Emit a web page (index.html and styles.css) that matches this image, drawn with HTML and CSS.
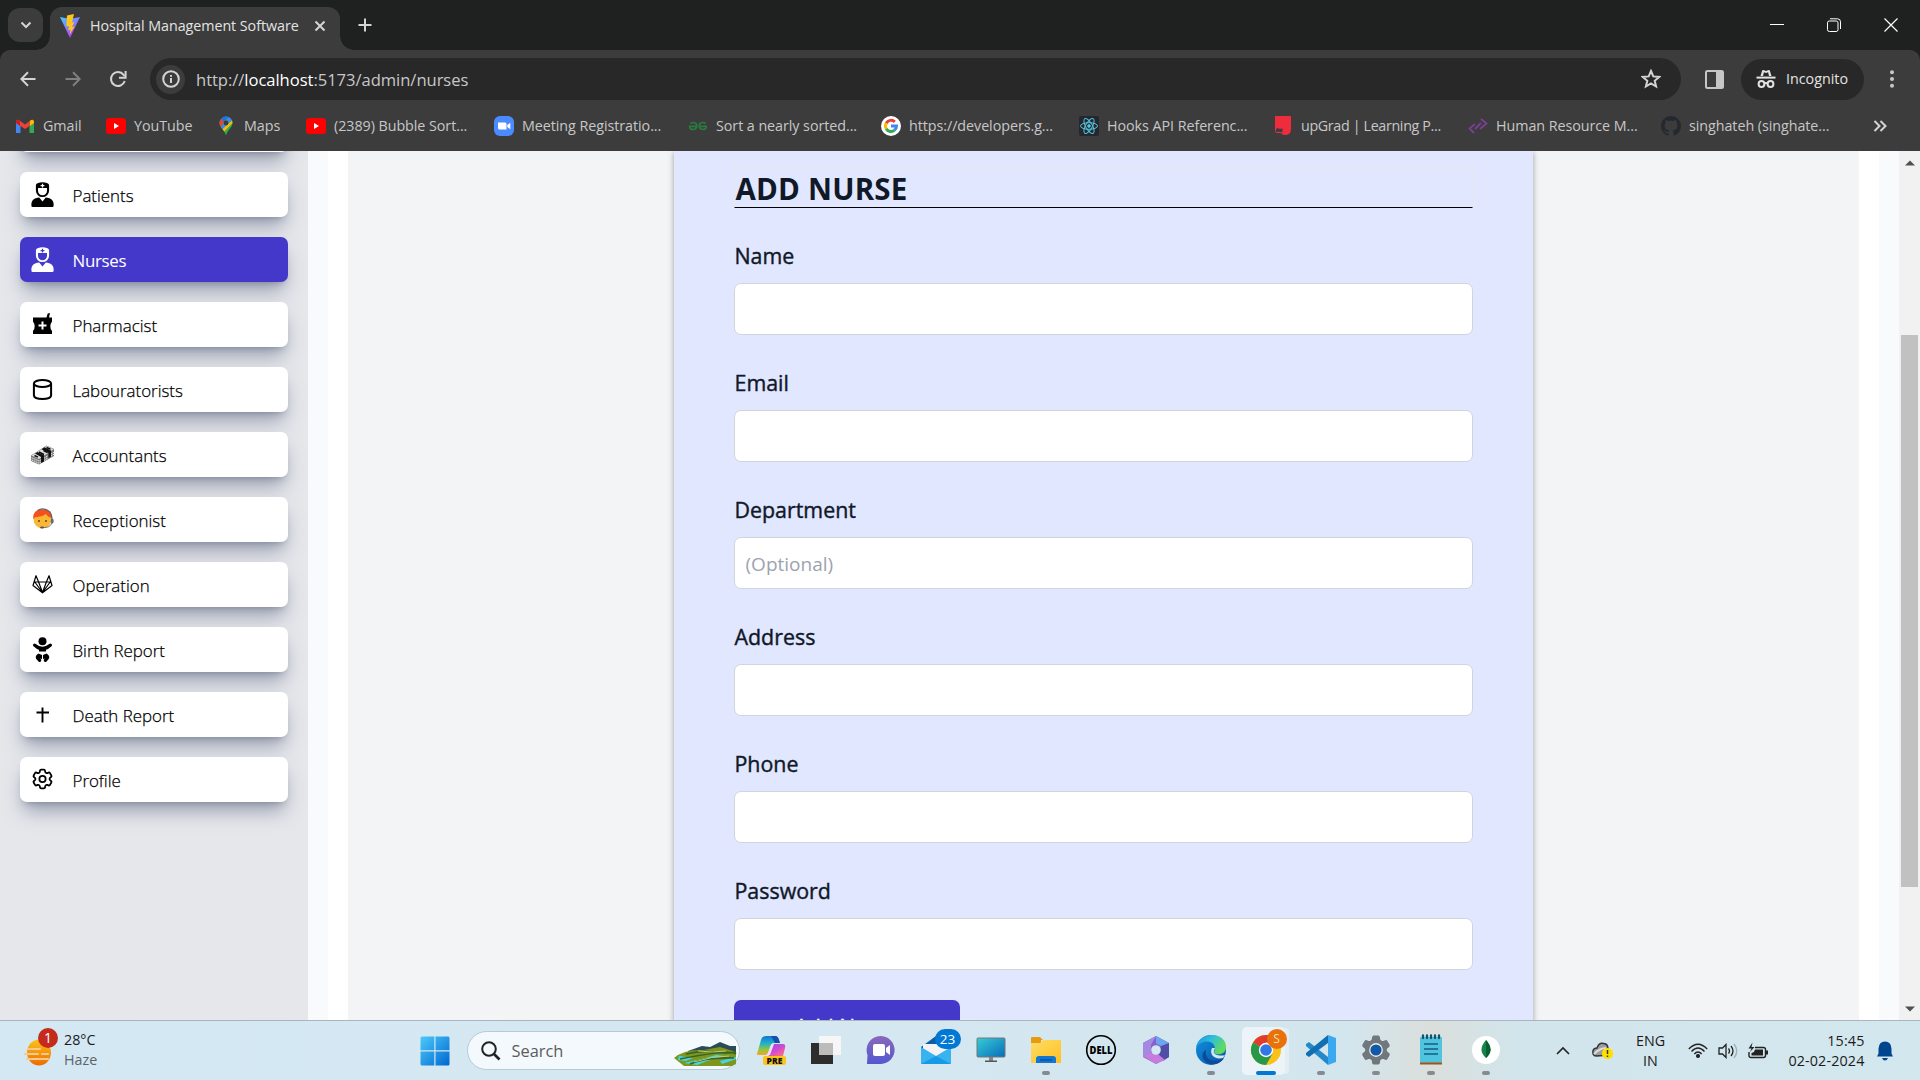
FILE: index.html
```html
<!DOCTYPE html>
<html lang="en">
<head>
<meta charset="utf-8">
<title>Hospital Management Software</title>
<link rel="stylesheet" href="styles.css">
</head>
<body>
<svg class="defs" aria-hidden="true">
  <defs>
    <symbol id="nurse" viewBox="0 0 24 26">
      <path fill-rule="evenodd" d="M5.4 3.2Q5.6 1.8 7 1.2Q12 -.8 17 1.2Q18.4 1.8 18.6 3.2V8.5A6.6 6.6 0 0 1 5.4 8.500ZM7.500 6V8.800A4.500 4.500 0 0 0 16.500 8.800V6ZM11.400 1.700V3H10.100V4.200H11.400V5.400H12.600V4.200H13.900V3H12.600V1.700Z"/>
      <path d="M2.200 25Q.900 25 .900 23.700V21.500Q1.300 17 7 15.700L8.700 15.500L12 19.400L15.300 15.500L17 15.700Q22.700 17 23.100 21.500V23.700Q23.100 25 21.800 25Z"/>
    </symbol>
    <symbol id="gear" viewBox="0 0 24 24">
      <path d="M9.594 3.940c.090-.542.560-.940 1.110-.940h2.593c.550 0 1.020.398 1.110.940l.213 1.281c.063.374.313.686.645.870.074.040.147.083.220.127.325.196.720.257 1.075.124l1.217-.456a1.125 1.125 0 0 1 1.370.490l1.296 2.247a1.125 1.125 0 0 1-.260 1.431l-1.003.827c-.293.241-.438.613-.430.992a7.723 7.723 0 0 1 0 .255c-.008.378.137.750.430.991l1.004.827c.424.350.534.955.260 1.430l-1.298 2.247a1.125 1.125 0 0 1-1.369.491l-1.217-.456c-.355-.133-.750-.072-1.076.124a6.470 6.470 0 0 1-.220.128c-.331.183-.581.495-.644.869l-.213 1.281c-.090.543-.560.940-1.110.940h-2.594c-.550 0-1.019-.398-1.110-.940l-.213-1.281c-.062-.374-.312-.686-.644-.870a6.520 6.520 0 0 1-.220-.127c-.325-.196-.720-.257-1.076-.124l-1.217.456a1.125 1.125 0 0 1-1.369-.490l-1.297-2.247a1.125 1.125 0 0 1 .260-1.431l1.004-.827c.292-.240.437-.613.430-.991a6.932 6.932 0 0 1 0-.255c.007-.380-.138-.751-.430-.992l-1.004-.827a1.125 1.125 0 0 1-.260-1.430l1.297-2.247a1.125 1.125 0 0 1 1.370-.491l1.216.456c.356.133.751.072 1.076-.124.072-.044.146-.086.220-.128.332-.183.582-.495.644-.869z"/>
      <circle cx="12" cy="12" r="3"/>
    </symbol>
    <symbol id="youtube" viewBox="0 0 20 20"><rect y="2" width="20" height="16" rx="3.500" fill="#f00"/><path d="M8 7l5 3-5 3z" fill="#fff"/></symbol>
    <linearGradient id="g-vite" x2=".6" y2="1"><stop stop-color="#41d1ff"/><stop offset="1" stop-color="#bd34fe"/></linearGradient>
    <linearGradient id="g-sun" x2="0" y2="1"><stop stop-color="#fcc419"/><stop offset="1" stop-color="#f06a00"/></linearGradient>
    <linearGradient id="g-win" x2="1" y2="1"><stop stop-color="#4cc9fb"/><stop offset="1" stop-color="#0068cf"/></linearGradient>
    <linearGradient id="g-cop" x2="0" y2="1"><stop stop-color="#1277d4"/><stop offset=".4" stop-color="#22b2c8"/><stop offset=".7" stop-color="#8fc640"/><stop offset="1" stop-color="#f5a623"/></linearGradient>
    <linearGradient id="g-cop2" x2=".6" y2="1"><stop stop-color="#8a4ee0"/><stop offset=".5" stop-color="#d34bd0"/><stop offset="1" stop-color="#ff7d68"/></linearGradient>
    <linearGradient id="g-chat" x2="0" y2="1"><stop stop-color="#8a68b8"/><stop offset="1" stop-color="#5557d0"/></linearGradient>
    <linearGradient id="g-screen" x2="1" y2="1"><stop stop-color="#36cdd6"/><stop offset="1" stop-color="#086cba"/></linearGradient>
    <linearGradient id="g-folder" x2="1" y2="1"><stop stop-color="#ffdc68"/><stop offset="1" stop-color="#ffc021"/></linearGradient>
    <linearGradient id="g-edge" x2="1" y2=".5"><stop stop-color="#168fdf"/><stop offset=".5" stop-color="#31bedc"/><stop offset="1" stop-color="#61dc58"/></linearGradient>
    <linearGradient id="g-edge2" x2="1" y2="1"><stop stop-color="#1093e0"/><stop offset="1" stop-color="#0b50a5"/></linearGradient>
  </defs>
</svg>

<header class="browser">
  <div class="tabstrip">
    <div class="tab-search"><svg width="12" height="12" viewBox="0 0 12 12"><path d="M1.500 3.500L6 8l4.500-4.500" class="line"/></svg></div>
    <div class="tab">
      <svg width="20" height="24" viewBox="0 0 20 24"><path d="M0 3L10 24 20 3 10 5z" fill="url(#g-vite)"/><path d="M14 0L7 1.400 6.300 12.500l2.700-.600-.800 4.600 2.400-.700L9.400 21l5.200-8.500-2.600.500 2.400-5-2.400.400z" fill="#ffc61c"/></svg>
      <span class="tab-title">Hospital Management Software</span>
      <svg class="tab-close" width="12" height="12" viewBox="0 0 12 12"><path d="M1.500 1.500l9 9m0-9l-9 9" class="line"/></svg>
    </div>
    <svg class="new-tab" width="14" height="14" viewBox="0 0 14 14"><path d="M7 .500v13M.500 7h13" class="line"/></svg>
    <div class="window-controls">
      <svg width="14" height="14" viewBox="0 0 14 14"><path d="M0 6.500h14" stroke="#fff"/></svg>
      <svg width="14" height="14" viewBox="0 0 14 14" fill="none" stroke="#fff"><rect x=".5" y="3" width="10.500" height="10.500" rx="1.800"/><path d="M3 .800h7.500a3 3 0 0 1 3 3V11"/></svg>
      <svg width="14" height="14" viewBox="0 0 14 14"><path d="M.500.500l13 13m0-13l-13 13" stroke="#fff" stroke-width="1.200"/></svg>
    </div>
  </div>

  <div class="toolbar">
    <div class="nav-buttons">
      <svg width="16" height="16" viewBox="0 0 16 16"><path d="M15.500 8H1.500M8 1.300L1.300 8 8 14.700" class="line"/></svg>
      <svg width="16" height="16" viewBox="0 0 16 16" class="dim"><path d="M.500 8h14M8 1.300L14.700 8 8 14.700" class="line"/></svg>
      <svg width="18" height="18" viewBox="0 0 18 18"><path d="M15.700 11A7 7 0 1 1 14.600 4.800L15.800 6.200" class="line"/><path d="M16.600 1v6.700H10" class="line"/></svg>
    </div>
    <div class="omnibox">
      <span class="site-info"><svg width="18" height="18" viewBox="0 0 18 18"><circle cx="9" cy="9" r="7.800" class="line"/><path d="M9 8v5M9 5v1.700" class="line"/></svg></span>
      <span class="url">http://<b>localhost</b>:5173/admin/nurses</span>
      <svg class="star" width="20" height="20" viewBox="0 0 20 20"><path d="M10 2l2.300 5.400 5.900.500-4.500 3.900 1.400 5.700L10 14.500l-5.100 3 1.400-5.700-4.500-3.900 5.900-.500z" class="line"/></svg>
    </div>
    <svg class="side-panel" width="19" height="19" viewBox="0 0 19 19"><rect x="1" y="1" width="17" height="17" rx="1.500" fill="none" stroke="#c7c7c7" stroke-width="2"/><path d="M11 1h7v17h-7z" fill="#c7c7c7"/></svg>
    <div class="incognito">
      <svg width="20" height="20" viewBox="0 0 20 20"><path d="M4.500 7L6.200 1.500Q6.500.700 7.300 1L10 2l2.700-1q.800-.300 1.100.500L15.500 7z" fill="#e3e3e3"/><path d="M7 7l.900-3.800L10 4l2.100-.8L13 7z" fill="#282828"/><path d="M.500 8.600h19" stroke="#e3e3e3" stroke-width="2"/><g fill="none" stroke="#e3e3e3" stroke-width="2"><circle cx="5.500" cy="15" r="2.900"/><circle cx="14.500" cy="15" r="2.900"/><path d="M8.200 14.500q1.800-1 3.600 0"/></g></svg>
      <span>Incognito</span>
    </div>
    <svg class="menu" width="6" height="18" viewBox="0 0 6 18" fill="#c7c7c7"><circle cx="3" cy="2.200" r="2"/><circle cx="3" cy="9" r="2"/><circle cx="3" cy="15.800" r="2"/></svg>
  </div>

  <nav class="bookmarks">
    <a><svg viewBox="0 0 20 20"><path d="M1 17V6l4.500 3v8z" fill="#4285f4"/><path d="M14.500 17V9L19 6v11z" fill="#34a853"/><path d="M1 5.500Q1.500 3 4 4l6 4.500V13L1 7z" fill="#ea4335"/><path d="M19 5.500Q18.500 3 16 4l-6 4.500V13l9-6z" fill="#ea4335"/><path d="M15 5q3-2.500 4 .500V7l-4 3z" fill="#fbbc04"/><path d="M1 5.500q1-3 4-.5v5L1 7z" fill="#c5221f"/></svg><span>Gmail</span></a>
    <a><svg><use href="#youtube"/></svg><span>YouTube</span></a>
    <a><svg viewBox="0 0 20 20"><path d="M10 .500A6.500 6.500 0 0 0 3.500 7c0 4.500 4.500 6 6.500 12.500C12 13 16.500 11.500 16.500 7A6.500 6.500 0 0 0 10 .500z" fill="#34a853"/><path d="M3.500 7A6.500 6.500 0 0 1 5 2.900L8 5.500 5 11q-1.500-2-1.500-4z" fill="#ea4335"/><path d="M5 2.900a6.500 6.500 0 0 1 7.500-2L8 5.500z" fill="#1a73e8"/><path d="M12.500.900A6.500 6.500 0 0 1 16 4.500L6.500 13 5 11z" fill="#4285f4"/><path d="M16 4.500L6.500 13l1.800 2.400L16.500 7z" fill="#fbbc04"/><circle cx="10" cy="7" r="2.400" fill="#3c3c3c"/></svg><span>Maps</span></a>
    <a><svg><use href="#youtube"/></svg><span>(2389) Bubble Sort...</span></a>
    <a><svg viewBox="0 0 20 20"><rect width="20" height="20" rx="6" fill="#4a8cff"/><path d="M4 6.500h7q1.500 0 1.500 1.500v5.500h-7Q4 13.500 4 12zM13.300 9l3-2.300v6.600l-3-2.300z" fill="#fff"/></svg><span>Meeting Registratio...</span></a>
    <a><svg viewBox="0 0 20 20" fill="none" stroke="#2a7a40" stroke-width="1.700"><path d="M2.500 7.500Q5 5.500 8 7.500 9 9 8.800 10.300H1M8.800 10.300Q8 13.500 5 13.500q-3 0-3.500-3M17.500 7.500Q15 5.500 12 7.500q-1 1.500-.8 2.800H19M11.200 10.300Q12 13.500 15 13.500q3 0 3.500-3"/></svg><span>Sort a nearly sorted...</span></a>
    <a><svg viewBox="0 0 20 20" fill="none" stroke-width="3"><circle cx="10" cy="10" r="10" fill="#fff" stroke="none"/><path d="M13.800 5.800A5.500 5.500 0 0 0 5.200 7.200" stroke="#ea4335"/><path d="M5.200 7.200a5.500 5.500 0 0 0 0 5.600" stroke="#fbbc05"/><path d="M5.200 12.800a5.500 5.500 0 0 0 8.300 1.400" stroke="#34a853"/><path d="M13.500 14.200A5.500 5.500 0 0 0 15.500 10H10" stroke="#4285f4"/></svg><span>https://developers.g...</span></a>
    <a><svg viewBox="0 0 20 20" fill="none" stroke="#58c4dc" stroke-width="1"><rect width="20" height="20" rx="2" fill="#23272f" stroke="none"/><ellipse cx="10" cy="10" rx="8.500" ry="3.300"/><ellipse cx="10" cy="10" rx="8.500" ry="3.300" transform="rotate(60 10 10)"/><ellipse cx="10" cy="10" rx="8.500" ry="3.300" transform="rotate(120 10 10)"/><circle cx="10" cy="10" r="1.300" fill="#58c4dc"/></svg><span>Hooks API Referenc...</span></a>
    <a><svg viewBox="0 0 20 20"><path d="M2 0h16v13q0 6-6 6-3 0-4-2H2z" fill="#ee2c3c"/><path d="M4 11.500q1 2 5.500 1v4Q5 15 2 17z" fill="#3c3c3c"/></svg><span class="tight">upGrad | Learning P...</span></a>
    <a><svg viewBox="0 0 20 20" fill="none" stroke="#7b3f98" stroke-width="1.800"><path d="M7 8l-5.500 4.500L6 17M13 3l5.500 4.500L12 13M7 13l6-6"/></svg><span>Human Resource M...</span></a>
    <a><svg viewBox="0 0 16 16"><path fill="#24292f" d="M8 0C3.580 0 0 3.580 0 8c0 3.540 2.290 6.530 5.470 7.590.400.070.550-.170.550-.380 0-.190-.010-.820-.010-1.490-2.010.370-2.530-.490-2.690-.940-.090-.230-.480-.940-.820-1.130-.280-.150-.680-.520-.010-.530.630-.010 1.080.580 1.230.820.720 1.210 1.870.870 2.330.660.070-.520.280-.870.510-1.070-1.780-.200-3.640-.890-3.640-3.950 0-.870.310-1.590.820-2.150-.080-.200-.360-1.020.080-2.120 0 0 .670-.210 2.200.820.640-.180 1.320-.270 2-.270s1.360.090 2 .270c1.530-1.040 2.200-.820 2.200-.820.440 1.100.160 1.920.080 2.120.510.560.820 1.270.820 2.150 0 3.070-1.870 3.750-3.650 3.950.290.250.540.730.540 1.480 0 1.070-.010 1.930-.010 2.200 0 .210.150.460.550.380A8.010 8.010 0 0 0 16 8c0-4.420-3.580-8-8-8z"/></svg><span>singhateh (singhate...</span></a>
    <svg class="more" viewBox="0 0 14 12"><path d="M1.500 1l5 5-5 5M7.500 1l5 5-5 5" class="line"/></svg>
  </nav>
</header>

<main class="viewport">
  <aside class="sidebar">
    <div class="item"></div>
    <div class="item"><svg><use href="#nurse"/></svg><span>Patients</span></div>
    <div class="item active"><svg><use href="#nurse"/></svg><span>Nurses</span></div>
    <div class="item"><svg viewBox="0 0 24 26"><path fill-rule="evenodd" d="M2.500 5.500H16L17.200 1.500 19.500 1 18.500 5.500H21.500V9.500Q18 14.500 21.500 19V22H2.500V19Q6 14.500 2.500 9.500ZM11 9.500V12.500H8V14.500H11V17.500H13V14.500H16V12.500H13V9.500Z"/></svg><span>Pharmacist</span></div>
    <div class="item"><svg viewBox="0 0 24 26" fill="none" stroke="#000" stroke-width="2"><ellipse cx="12" cy="6.500" rx="8.600" ry="3.600"/><path d="M3.400 6.500V18.500Q4 22 12 22T20.600 18.500V6.500"/></svg><span>Labouratorists</span></div>
    <div class="item"><svg viewBox="0 0 24 26"><path d="M.500 13.500L16 3.500l7.500 3.500v7L8.500 22.500.500 19z" fill="#777"/><path d="M1 13.500L16 4l7 3.200L8.500 17z" fill="#ddd"/><path d="M4.500 11.500l2.500-1.600 6.500 3.300v6.300l-3 1.500v-6zM11 7.200L14 5.300 20.500 8.500v6l-2.500 1.500v-5z" fill="#111"/><path d="M4 13.500l3.500 1.600M8.500 10l5 2.500M13 8.500l4 2M16 5.500l4 1.800" stroke="#111" stroke-width="1.500"/><path d="M1 15.700l7.500 3.300 2.500-1.400M13.500 16.200l4-2.500M20.500 12l3-1.800M1 17.900l7.500 3.300 2.500-1.400M13.500 18.400l4-2.500M20.500 14l3-1.800" stroke="#fff" stroke-width=".9" fill="none" stroke-dasharray="1.500 .7"/></svg><span>Accountants</span></div>
    <div class="item"><svg viewBox="0 0 24 26"><circle cx="12" cy="12.500" r="9" fill="#fbb636"/><path d="M2.700 12Q2 2.500 12.500 2.300 21 2.500 21.500 11q-4-.500-6-4Q11 10.500 5 10z" fill="#f4511e"/><path d="M7 3.500Q13-.500 19.500 5q2 3 2 7" fill="none" stroke="#666" stroke-width="1.300"/><path d="M21.500 12v4q-2 5-9 4.500" fill="none" stroke="#777"/><ellipse cx="21.700" cy="14" rx="1.500" ry="2.600" fill="#546e7a"/><ellipse cx="11.500" cy="20.500" rx="2" ry="1" fill="#555"/><circle cx="8.500" cy="14" r="1" fill="#654321"/><circle cx="15.500" cy="14" r="1" fill="#654321"/></svg><span>Receptionist</span></div>
    <div class="item"><svg viewBox="0 0 24 26" fill="none" stroke="#000" stroke-width="1.200" stroke-linejoin="round"><path d="M5.500 3.700L2.500 13.500 12 20.800l9.500-7.300-3-9.800-2.600 6.300H8.100zM8.100 10L12 20.500 15.900 10M4.300 10H8.100M19.700 10h-3.800M4.300 10L12 20.500 19.700 10"/></svg><span>Operation</span></div>
    <div class="item"><svg viewBox="0 0 24 26"><circle cx="12" cy="4.200" r="4"/><path d="M3 7Q1.700 8 3 9.300 6.500 12.500 8.500 12.800v1.800h7v-1.800q2-.3 5.500-3.500Q22.300 8 21 7q-1-1-2.300.100Q15.500 9.800 12 9.800T5.300 7.100Q4 6 3 7zM8 16.500l3.500 1.500v4.500L10 21l.8 2.800Q9.500 26 8 24.500 5 21.500 5.200 20 5.500 17.500 8 16.500zM16 16.500L12.500 18v4.500L14 21l-.8 2.800q1.300 2.200 2.800.700 3-3 2.800-4.500-.3-2.500-2.800-3.500z"/></svg><span>Birth Report</span></div>
    <div class="item"><svg viewBox="0 0 24 26" fill="none" stroke="#000" stroke-width="1.900"><path d="M12 5.500v15M6 10.500h12.500"/></svg><span>Death Report</span></div>
    <div class="item"><svg class="profile-icon" viewBox="1.500 1.500 21 21" fill="none" stroke="#000" stroke-width="1.700"><use href="#gear" width="24" height="24"/></svg><span>Profile</span></div>
  </aside>
  <section class="content">
    <div class="panel">
      <form class="card">
        <h1>ADD NURSE</h1>
        <label>Name<input type="text"></label>
        <label>Email<input type="text"></label>
        <label>Department<input type="text" placeholder="(Optional)"></label>
        <label>Address<input type="text"></label>
        <label>Phone<input type="text"></label>
        <label>Password<input type="password"></label>
        <button type="button">Add Nurse</button>
      </form>
    </div>
  </section>
  <div class="scrollbar">
    <svg width="10" height="6" viewBox="0 0 10 6"><path d="M0 5.500L5 .500l5 5z" fill="#4d5155"/></svg>
    <div class="thumb"></div>
    <svg width="10" height="6" viewBox="0 0 10 6"><path d="M0 .500l5 5 5-5z" fill="#4d5155"/></svg>
  </div>
</main>

<footer class="taskbar">
  <div class="weather">
    <svg width="36" height="42" viewBox="0 0 36 42"><ellipse cx="15" cy="24.500" rx="12" ry="13" fill="url(#g-sun)"/><path d="M4 21h12M1 26h13M18 26h6M3 31h21" stroke="#f6c98e" stroke-width="2.200" stroke-linecap="round"/><circle cx="24" cy="10" r="10" fill="#c42b1c"/><text x="24" y="15" text-anchor="middle" font-size="14" fill="#fff">1</text></svg>
    <div class="weather-text"><span>28°C</span><span class="muted">Haze</span></div>
  </div>
  <svg class="start" width="30" height="30" viewBox="0 0 30 30" fill="url(#g-win)"><path d="M.500 2q0-1.500 1.500-1.500H14.300V14.300H.500zM15.500.500H28q1.500 0 1.500 1.500v12.300h-14zM.500 15.500h13.800v14H2Q.500 29.500.500 28zM15.500 15.500h14V28q0 1.500-1.500 1.500H15.500z"/></svg>
  <div class="search">
    <svg width="20" height="20" viewBox="0 0 20 20"><circle cx="8" cy="8" r="6.800" fill="none" stroke="#222" stroke-width="2"/><path d="M13 13l5.500 5.500" stroke="#222" stroke-width="2.600"/></svg>
    <span>Search</span>
    <svg class="landscape" width="63" height="25" viewBox="0 0 63 25"><path d="M14 10l14-5 8 1 10-5 10 4h6v12H14z" fill="#2d4a57"/><path d="M0 17Q10 8 30 9l16-3 16 5v12l-4 2H10z" fill="#7d971b"/><path d="M5 15l14 2-7 3-8-1zM10 22l22-5 10-3 9 1-18 5-10 4zM46 20l16-4v2l-14 5z" fill="#43d7ed"/><path d="M12 13q16-4 28-2T62 11M6 18q20-4 36-6t20 1M16 23q15-7 44-6" fill="none" stroke="#37632a" stroke-width="1.600"/><path d="M24 10q15 2 28 0M20 21q18-6 35-6" fill="none" stroke="#c3ca69"/></svg>
  </div>
  <div class="apps">
    <div class="app"><svg viewBox="0 0 32 32"><path d="M2 20L6 6q1-4 5-4h9q3 0 4 4l1 3h-6q-3 0-4 4l-2 6q-1 2-3 2H4q-3 0-2-2z" fill="url(#g-cop)"/><path d="M16 2h4q3 0 4 4l1 3h-5z" fill="#174db0"/><path d="M19 10h9q3 0 2 4l-2 8q-1 4-5 4h-8q-3 0-1-5l3-8q1-3 2-3z" fill="url(#g-cop2)"/><path d="M19 10h-2l-5 11h3z" fill="#f3ddf5"/><rect x="8" y="22" width="23" height="9" rx="2" fill="#fcc51c"/><text x="19.500" y="29.800" text-anchor="middle" font-size="8.500" font-weight="800" fill="#111">PRE</text></svg></div>
    <div class="app"><svg viewBox="0 0 32 32"><path d="M1 9h22v21H1z" fill="#2d2d2d"/><path d="M9 2h22v19H9z" fill="#f6f6f6"/><path d="M9 9h14v12H9z" fill="#bcbcbc"/></svg></div>
    <div class="app"><svg viewBox="0 0 32 32"><path d="M2 30l.500-9A14 14 0 1 1 16 30z" fill="url(#g-chat)"/><rect x="8" y="10" width="12" height="12" rx="2" fill="#fff"/><path d="M21 14l4-3v10l-4-3z" fill="#fff"/></svg></div>
    <div class="app"><svg viewBox="0 0 32 32"><path d="M1 13L16 2l15 11v17H1z" fill="#0b5cab"/><path d="M3 10h26v8l-13 9-13-9z" fill="#f3f3f3"/><path d="M1 13l15 9 15-9v17H1z" fill="#38b3ef"/><path d="M1 30l15-8 15 8z" fill="#169ae6"/></svg><b class="badge">23</b></div>
    <div class="app"><svg viewBox="0 0 32 32"><path d="M14 22h4v5h-4z" fill="#888"/><path d="M10 26.500h12V28H10z" fill="#555"/><rect x="2" y="4" width="28" height="19" rx="1" fill="url(#g-screen)" stroke="#777"/></svg></div>
    <div class="app running"><svg viewBox="0 0 32 32"><path d="M1 4q0-1 1-1h8l3 3h-2v8H1z" fill="#e59a10"/><path d="M1 9h9l3-3h18v23H1z" fill="url(#g-folder)"/><path d="M6 29v-4q0-3 3-3h14q3 0 3 3v4z" fill="#1376d0"/><path d="M10 26h12" stroke="#0a4184"/></svg></div>
    <div class="app"><svg viewBox="0 0 32 32"><circle cx="16" cy="16" r="14.300" fill="none" stroke="#000" stroke-width="1.600"/><text x="16" y="19.800" text-anchor="middle" font-size="10.500" font-weight="800" textLength="23" lengthAdjust="spacingAndGlyphs">DELL</text></svg></div>
    <div class="app"><svg viewBox="0 0 32 32"><path d="M16 2l13 7v14l-13 7-13-7V9z" fill="#8461d2"/><path d="M16 2l13 7v7l-8-4-5-2.500V2z" fill="#6aa5ee"/><path d="M29 9v14l-6 4-4-6 2-9z" fill="#524ca9"/><path d="M3 22l8-4 8 3 6 5-9 4z" fill="#c67bde"/><path d="M3 9l13-7-5 9v8l-8 4z" fill="#a489df"/><circle cx="16" cy="16" r="4.800" fill="#d3e8f0"/></svg></div>
    <div class="app running"><svg viewBox="0 0 32 32"><circle cx="16" cy="16" r="15" fill="url(#g-edge2)"/><path d="M1 14C3-3 31-3 31 13c0 6-5 8-10 7-3-1-2-3-1-4C21 5 5 5 1 14z" fill="url(#g-edge)"/><path d="M11 16c-2 9 7 14 18 8-4 7-15 9-20 2-3-4-1-9 2-10z" fill="#0b4c99"/><path d="M20 14c-1 3-3 5 2 7q5 1 8 0l-2 3c-9 2-14-4-11-10z" fill="#d5e6ee"/></svg></div>
    <div class="app current"><svg viewBox="0 0 32 32"><circle cx="16" cy="16" r="15" fill="#fbc116"/><path d="M16 16L3 8.500A15 15 0 0 1 29 8.500H16z" fill="#e33b2e"/><path d="M3 8.500A15 15 0 0 0 16 31l6.500-11.200L16 16z" fill="#269847"/><circle cx="16" cy="16" r="7.200" fill="#fff"/><circle cx="16" cy="16" r="5.800" fill="#3177e8"/></svg><b class="badge profile">S</b></div>
    <div class="app running"><svg viewBox="0 0 32 32"><path d="M1 10l3-2 19 15V31L1 12z" fill="#2489ca"/><path d="M1 21l3 2L23 9V1L1 19z" fill="#1070b3"/><path d="M23 1l8 3v24l-8 3z" fill="#3aa9f0"/></svg></div>
    <div class="app running"><svg viewBox="2 2 20 20" fill="#70777d"><use href="#gear" width="24" height="24"/><circle cx="12" cy="12" r="4.300" fill="#eee"/><circle cx="12" cy="12" r="3.500" fill="#1159a7"/></svg></div>
    <div class="app running"><svg viewBox="0 0 32 32"><rect x="5" y="3" width="22" height="26" rx="1" fill="#50c3df"/><path d="M5 28.500h22v2H5z" fill="#aa550f"/><path d="M9 10h14M9 15h14M9 20h14" stroke="#125f82" stroke-width="1.500"/><path d="M8 1.500v2.500M12 1.500v2.500M16 1.500v2.500M20 1.500v2.500M24 1.500v2.500" stroke="#14536e" stroke-width="2.300" stroke-linecap="round"/></svg></div>
    <div class="app running"><svg viewBox="0 0 32 32"><circle cx="16" cy="16" r="14" fill="#fff"/><path d="M16 6q9 10 0 18-9-8 0-18z" fill="#178347"/><path d="M16 6q9 10 0 18z" fill="#0b5d36"/></svg></div>
  </div>
  <div class="tray">
    <svg width="14" height="9" viewBox="0 0 14 9"><path d="M1 8l6-6 6 6" fill="none" stroke="#222" stroke-width="1.600"/></svg>
    <svg class="cloud" width="22" height="20" viewBox="0 0 22 20"><path d="M5 15Q0 15 1 10 1.500 7 5 7 7 1 12 2.500 16 3 16 8v6z" fill="#9d9d9d" stroke="#333" stroke-width="1.400"/><path d="M2 13Q8 7 14 7" stroke="#ddd" stroke-width="2" fill="none"/><circle cx="15.500" cy="12.500" r="5.600" fill="#ffe100"/><path d="M15.500 9v4M15.500 14.500v1.600" stroke="#333" stroke-width="1.500"/></svg>
    <div class="lang"><span>ENG</span><span>IN</span></div>
    <svg class="wifi" width="20" height="16" viewBox="0 0 20 16" fill="none" stroke="#222" stroke-width="1.300"><path d="M.800 6Q10-3.500 19.200 6M3.500 8.500Q10 1.500 16.500 8.500M6.300 11Q10 7 13.700 11"/><circle cx="10" cy="13" r="1.400" fill="#222"/></svg>
    <svg class="speaker" width="20" height="16" viewBox="0 0 20 16" fill="none" stroke="#222" stroke-width="1.300"><path d="M1 5h3.500L8 1.500v13L4.500 11H1zM10.500 5.500q2 2.500 0 5M13 3q4 5 0 10"/><path d="M16 1q5.500 7 0 14" stroke="#9eb0b8"/></svg>
    <svg class="battery" width="20" height="18" viewBox="0 0 20 18"><path d="M7 5.500h8.500q2 0 2 2v6q0 2-2 2H3q-2 0-2-2V10" fill="none" stroke="#222" stroke-width="1.400"/><path d="M7 7.500h8v6H3.500V11L6 10zM18 8.500h2v4h-2zM4.500.500L.500 6.500h3L2 10l4.500-5h-3z" fill="#222"/></svg>
    <div class="clock"><span>15:45</span><span>02-02-2024</span></div>
    <svg class="bell" width="16" height="20" viewBox="0 0 16 20"><path d="M8 .500q6 0 6.500 7v5l1.500 3H0l1.500-3v-5Q2 .500 8 .500zM5 17h6q-1 2.500-3 2.500T5 17z" fill="#00468f"/></svg>
  </div>
</footer>
</body>
</html>
```
FILE: styles.css
```css
* { box-sizing: border-box; }

body {
  margin: 0;
  width: 1920px;
  height: 1080px;
  overflow: hidden;
  display: flex;
  flex-direction: column;
  font-family: "Open Sans", "Noto Sans", sans-serif;
  font-size: 14.3px;
}

svg { display: block; flex: none; }
.defs { position: absolute; width: 0; height: 0; }
.line { fill: none; stroke: #d4d4d4; stroke-width: 2; }
span, label { white-space: nowrap; }

/* Browser frame */
.browser { height: 151px; flex: none; background: #1f2120; color: #c7c7c7; }

.tabstrip { display: flex; align-items: center; height: 50px; padding-left: 8px; }
.tab-search {
  width: 35px; height: 34px; border-radius: 12px; background: #3c3c3c;
  display: grid; place-items: center;
}
.tab {
  position: relative; align-self: flex-end;
  width: 290px; height: 43px; margin-left: 7px; padding-left: 10px;
  display: flex; align-items: center; gap: 10px;
  border-radius: 12px 12px 0 0; background: #3c3c3c; color: #e3e3e3;
}
.tab::before, .tab::after {
  content: ""; position: absolute; bottom: 0; width: 14px; height: 14px;
}
.tab::before { left: -14px; background: radial-gradient(circle at 0 0, transparent 13.5px, #3c3c3c 14px); }
.tab::after { right: -14px; background: radial-gradient(circle at 100% 0, transparent 13.5px, #3c3c3c 14px); }
.tab svg { margin-top: -5px; }
.tab-title { width: 214px; margin-top: -7px; letter-spacing: -.05px; }
.new-tab { margin-left: 18px; }
.window-controls { display: flex; gap: 43px; margin: 0 22px 0 auto; }

.toolbar {
  display: flex; align-items: center; height: 58px;
  background: #3c3c3c; border-radius: 10px 10px 0 0;
}
.nav-buttons { display: flex; align-items: center; gap: 29px; width: 150px; padding-left: 20px; }
.nav-buttons svg:last-child { margin-left: -1px; }
.dim { opacity: .45; }
.omnibox {
  width: 1531px; height: 42px; padding: 0 20px 0 6px;
  display: flex; align-items: center;
  border-radius: 21px; background: #282828;
}
.site-info { width: 29px; height: 29px; border-radius: 50%; background: #3c3c3c; display: grid; place-items: center; }
.url { margin-left: 11px; font-size: 16.6px; letter-spacing: -.05px; color: #c7c7c7; }
.url b { font-weight: 400; color: #fff; }
.star { margin-left: auto; }
.side-panel { margin-left: 24px; }
.incognito {
  display: flex; align-items: center; gap: 10px;
  width: 123px; height: 41px; margin-left: 17px; padding-left: 15px;
  border-radius: 21px; background: #282828; color: #e3e3e3;
}
.incognito span { padding-bottom: 2px; }
.menu { margin-left: 25px; }

.bookmarks {
  display: grid; align-items: center; height: 43px; padding: 0 0 7px 15px;
  grid-template-columns: 91px 110px 90px 188px 194px 193px 198px 194px 195px 193px 212px 14px;
  background: #3c3c3c;
}
.bookmarks a { display: flex; align-items: center; gap: 8px; letter-spacing: -.05px; }
.bookmarks a svg { width: 20px; height: 20px; }
.bookmarks span { padding-bottom: 2px; }
.bookmarks .tight { letter-spacing: -.35px; }
.more { width: 14px; height: 12px; }

/* Page */
.viewport { flex: 1; min-height: 0; display: flex; overflow: hidden; }
.sidebar {
  width: 308px; flex: none; padding: 0 20px; overflow: hidden;
  display: flex; flex-direction: column; gap: 20px;
  background: #e5e7eb;
}
.item {
  display: flex; align-items: center; flex: none;
  height: 45px; padding-left: 10px;
  border-radius: 7px; background: #fff; color: #000;
  font-size: 16.9px; font-weight: 300;
  box-shadow: 0 12.5px 19px -4px rgba(75, 85, 115, .5), 0 5px 7.5px -5px rgba(75, 85, 115, .5);
}
.item:first-child { margin-top: -44px; }
.item svg { width: 25px; height: 26px; margin-right: 17.5px; }
.item .profile-icon { padding: 2px 0; margin-top: -1px; }
.item span { padding-top: 1px; -webkit-text-stroke: .25px currentColor; }
.item.active { background: #4338ca; color: #fff; fill: #fff; font-weight: 400; letter-spacing: -.3px; }
.item.active span { -webkit-text-stroke: 0; }

.content { flex: 1; display: flex; background: #f9fafb; padding: 0 20px; }
.panel {
  flex: 1; border: solid #fff; border-width: 0 20px;
  display: flex; justify-content: center; background: #f3f4f6;
}
.card {
  width: 859px; height: 1000px; margin-left: -1px; padding: 15px 60px 0;
  display: flex; flex-direction: column; align-items: stretch; flex: none;
  background: #e0e7ff; color: #111827;
  box-shadow: 0 1px 6px rgba(0, 0, 0, .35);
}
.card h1 {
  margin: 0 0 24px; height: 42px; padding-left: 1px;
  border: 1px solid #e5e7eb; border-bottom-color: #000;
  font-size: 29.5px; line-height: 43px; font-weight: 700; letter-spacing: .2px;
}
.card label {
  display: block; height: 127px; padding-left: 1px;
  font-size: 21.4px; line-height: 48px;
  -webkit-text-stroke: .4px currentColor;
}
.card input {
  display: block; width: 739px; height: 52px; margin: 3px 0 0 -1px; padding: 1px 11px 0;
  border: 1px solid #d1d5db; border-radius: 7px; background: #fff;
  font: 19px "Open Sans", "Noto Sans", sans-serif;
  -webkit-text-stroke: 0;
}
.card input::placeholder { color: #9ca3af; }
.card button {
  width: 226px; height: 53px; margin: 6px 0 0; border: 0; border-radius: 7px; padding: 0;
  background: #4338ca; color: #fff;
  font: 21px "Open Sans", "Noto Sans", sans-serif;
  -webkit-text-stroke: .4px currentColor;
}

.scrollbar {
  width: 21px; display: flex; flex-direction: column; align-items: center;
  padding: 9px 0 8px; background: #f1f1f1;
}
.thumb { width: 17px; height: 552px; margin-top: 169px; margin-bottom: auto; background: #c1c1c1; }

/* Taskbar */
.taskbar {
  height: 60px; flex: none; display: flex; align-items: center;
  border-top: 1px solid #a9b7bd;
  background: linear-gradient(90deg, #d4e8f4 0%, #d5e8f1 45%, #d3e6ee 70%, #dadfdc 74.5%, #d2e5ec 79%, #d3e7ee 100%);
  color: #1b1b1b;
}
.weather { display: flex; width: 419.5px; padding-left: 24px; gap: 4px; align-items: center; margin-top: -3px; }
.weather-text, .lang, .clock { display: flex; flex-direction: column; line-height: 20px; }
.weather-text { padding-top: 2px; }
.muted { color: #5a646a; }
.search {
  width: 273px; height: 39px; margin-left: 17px; padding: 0 2px 0 13px;
  display: flex; align-items: center;
  border-radius: 20px; background: #f3f9fd; border: 1px solid #b5cad6;
}
.search span { margin-left: 11px; font-size: 16.4px; color: #5c5c5c; }
.landscape { margin-left: auto; margin-top: 5px; }
.apps { display: flex; margin-left: 4px; }
.app { position: relative; width: 55px; height: 48px; display: grid; place-items: center; }
.app > svg { width: 32px; height: 32px; margin-top: -1px; }
.running::after, .current::after {
  content: ""; position: absolute; left: 23.5px; bottom: 0;
  width: 8px; height: 4px; border-radius: 2px; background: #858b90;
}
.current { z-index: 0; }
.current::before {
  content: ""; position: absolute; z-index: -1; left: 3px; top: 0; width: 43px; height: 48px;
  border-radius: 5px; background: #ecf4fa; box-shadow: 5px 0 0 -1px #e3edf3;
}
.current::after { left: 17.5px; width: 20px; background: #0078d4; }
.badge {
  position: absolute; left: 26px; top: 2px; width: 26px; height: 20px;
  border-radius: 10px; background: #0078d4; color: #fff;
  font-size: 13.5px; font-weight: 400; line-height: 20px; text-align: center;
}
.badge.profile { left: 28px; width: 20px; background: #e8710a; color: #fbdcae; font-size: 12px; }
.tray { display: flex; align-items: center; flex: 1; margin-left: 42px; }
.cloud { margin-left: 22px; }
.lang { width: 30px; margin-left: 22px; align-items: center; }
.wifi { margin-left: 22px; }
.speaker, .battery { margin-left: 10px; }
.clock { width: 82px; margin-left: 15px; align-items: flex-end; letter-spacing: .15px; }
.bell { margin-left: 12px; }
```
